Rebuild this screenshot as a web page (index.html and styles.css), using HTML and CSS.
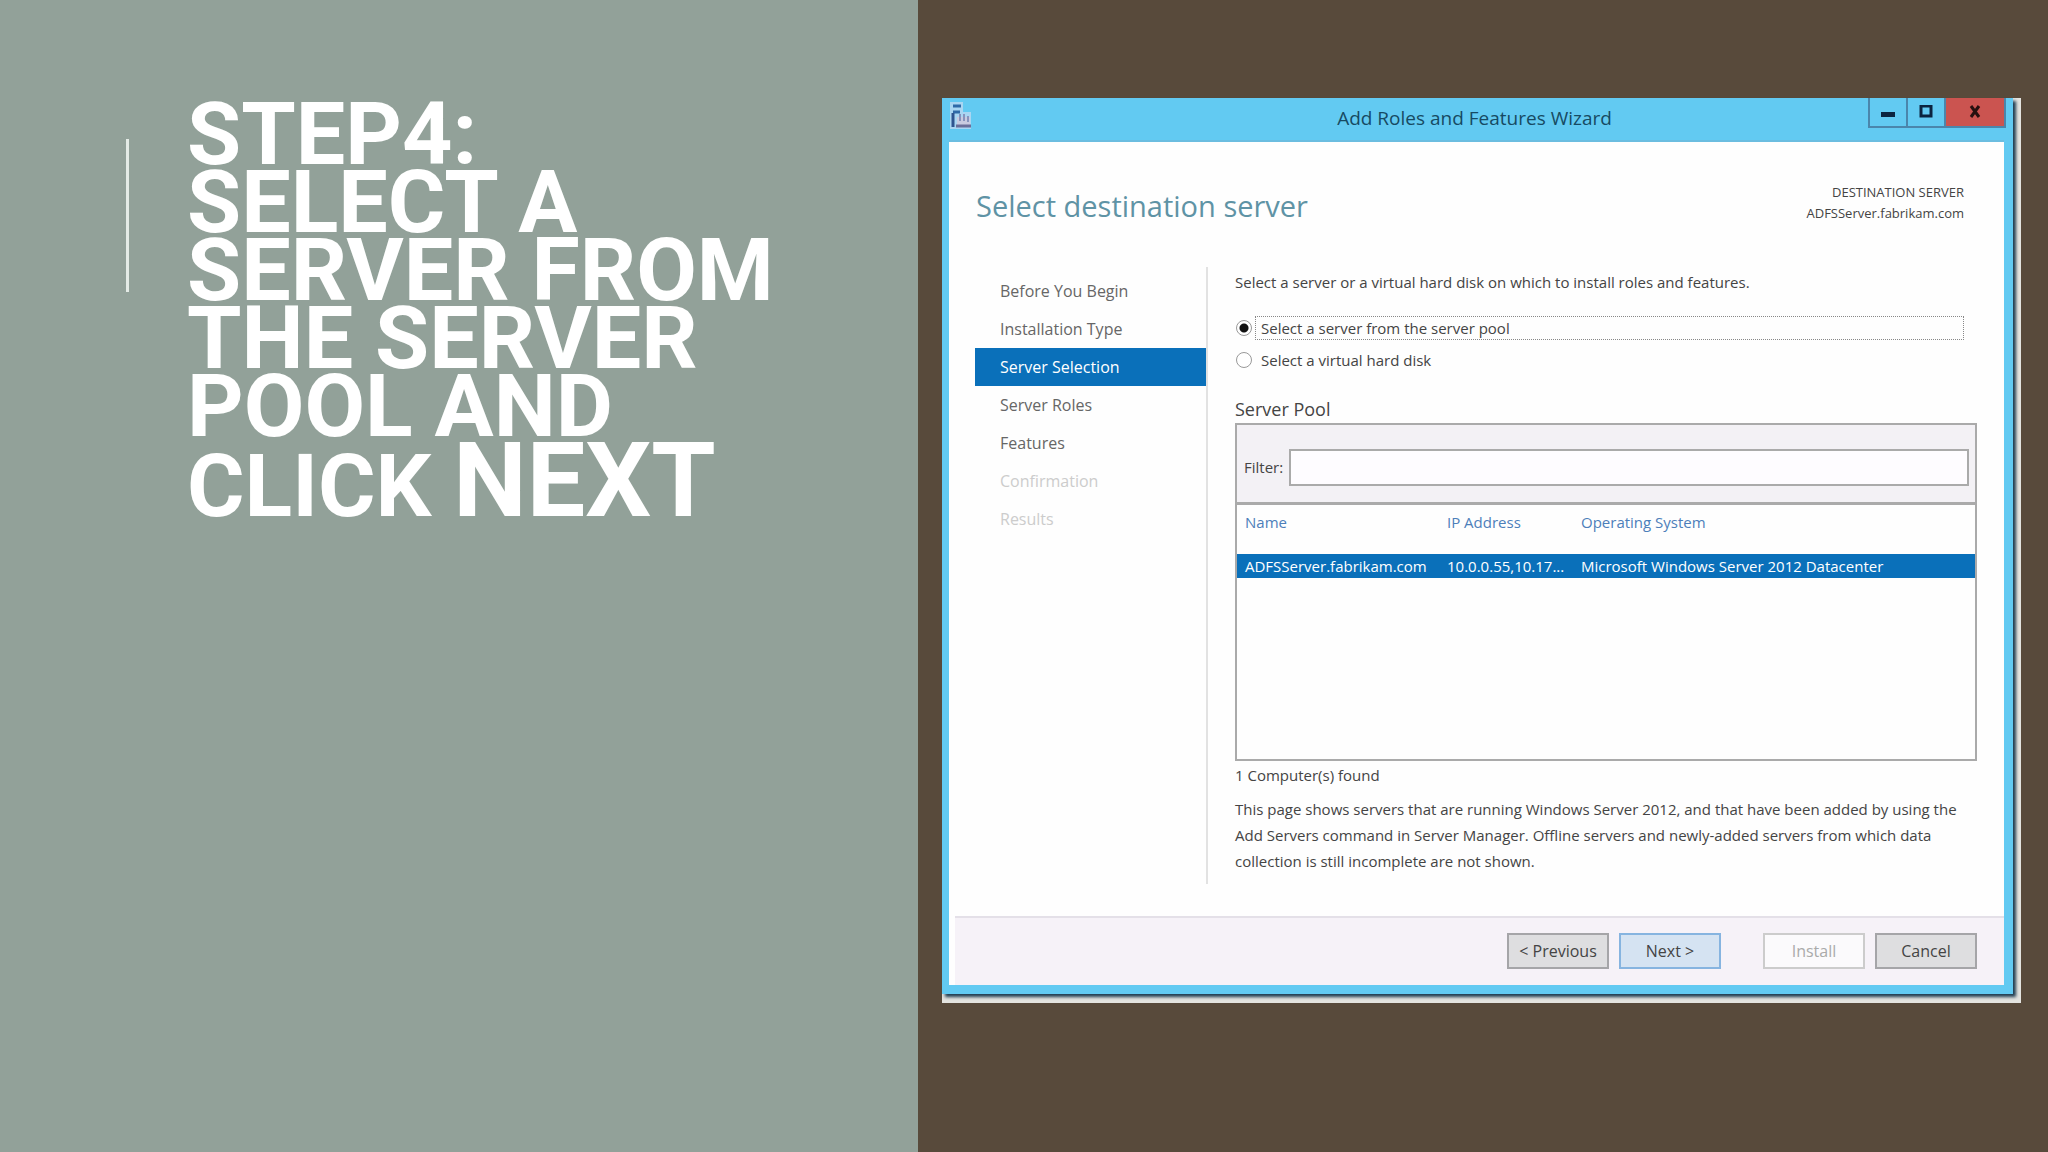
FILE: index.html
```html
<!DOCTYPE html>
<html lang="en">

<head>
    <meta charset="UTF-8">
    <meta name="viewport" content="width=device-width, initial-scale=1.0">
    <title>Step 4: Select a server</title>
    <link rel="stylesheet" href="styles.css">
</head>

<body>

    <div class="slide">
        <!-- Step title -->
        <section class="step">
            <h1>STEP4:<br>SELECT A<br>SERVER FROM<br>THE SERVER<br>POOL AND<br>CLICK <span class="next">NEXT</span></h1>
        </section>

        <!-- Wizard -->
        <section class="stage">
            <div class="frame">
                <div class="window">
                    <header class="titlebar">
                        <svg class="app-icon" viewBox="0 0 24 30" aria-hidden="true">
                            <path d="M1 1h13v10h8v17H1z" fill="#a9d6f2"/>
                            <path d="M4 5h8M4 11h7" stroke="#2f6aa8" stroke-width="3"/>
                            <path d="M4 12v14" stroke="#2f5590" stroke-width="3"/>
                            <path d="M8 16h13v10H8z" fill="#c9cbe0"/>
                            <path d="M11 13v7M15 13v7M19 15v6" stroke="#8794bd" stroke-width="2"/>
                            <path d="M7 25h15" stroke="#6b6f9a" stroke-width="3"/>
                        </svg>
                        <span class="title">Add Roles and Features Wizard</span>
                        <div class="controls">
                            <button type="button" class="minimize" aria-label="Minimize">
                                <svg width="14" height="14" viewBox="0 0 14 14"><path d="M0 9.5h14" stroke="#0b2440" stroke-width="5"/></svg>
                            </button>
                            <button type="button" class="maximize" aria-label="Maximize">
                                <svg width="14" height="14" viewBox="0 0 14 14"><path d="M2 1h10v10H2z" fill="none" stroke="#0b2440" stroke-width="3"/></svg>
                            </button>
                            <button type="button" class="close" aria-label="Close">
                                <svg width="12" height="14" viewBox="0 0 12 14"><path d="M2 1l8 11M10 1L2 12" stroke="#26100f" stroke-width="3"/></svg>
                            </button>
                        </div>
                    </header>

                    <div class="heading">
                        <h2>Select destination server</h2>
                        <p class="destination">DESTINATION SERVER<br>ADFSServer.fabrikam.com</p>
                    </div>

                    <div class="content">
                        <nav class="pages">
                            <a href="#">Before You Begin</a>
                            <a href="#">Installation Type</a>
                            <a href="#" class="active">Server Selection</a>
                            <a href="#">Server Roles</a>
                            <a href="#">Features</a>
                            <a class="disabled">Confirmation</a>
                            <a class="disabled">Results</a>
                        </nav>

                        <form class="selection">
                            <p class="intro">Select a server or a virtual hard disk on which to install roles and features.</p>
                            <div class="option">
                                <input type="radio" id="pool" name="target" checked>
                                <label for="pool" class="focused">Select a server from the server pool</label>
                            </div>
                            <div class="option">
                                <input type="radio" id="disk" name="target">
                                <label for="disk">Select a virtual hard disk</label>
                            </div>

                            <h3>Server Pool</h3>
                            <div class="pool">
                                <div class="filter">
                                    <label for="filter">Filter:</label>
                                    <input type="text" id="filter">
                                </div>
                                <table>
                                    <thead>
                                        <tr>
                                            <th class="name">Name</th>
                                            <th class="ip">IP Address</th>
                                            <th>Operating System</th>
                                        </tr>
                                    </thead>
                                    <tbody>
                                        <tr>
                                            <td>ADFSServer.fabrikam.com</td>
                                            <td>10.0.0.55,10.17...</td>
                                            <td>Microsoft Windows Server 2012 Datacenter</td>
                                        </tr>
                                    </tbody>
                                </table>
                            </div>
                            <p class="found">1 Computer(s) found</p>
                            <p class="note">This page shows servers that are running Windows Server 2012, and that have been added by using the Add Servers command in Server Manager. Offline servers and newly-added servers from which data collection is still incomplete are not shown.</p>
                        </form>
                    </div>

                    <footer class="buttons">
                        <button type="button">&lt; Previous</button>
                        <button type="button" class="primary">Next &gt;</button>
                        <button type="button" class="install" disabled>Install</button>
                        <button type="button">Cancel</button>
                    </footer>
                </div>
            </div>
        </section>
    </div>

</body>

</html>
```
FILE: styles.css
```css
* {
    box-sizing: border-box;
}

body {
    margin: 0;
    font-family: "Open Sans", sans-serif;
    font-size: 15px;
    color: #444;
}

h1, h2, h3, p {
    margin: 0;
    font-weight: normal;
}

.slide {
    display: grid;
    grid-template-columns: 918fr 1130fr;
    min-height: 100vh;
}

/* Left panel */
.step {
    display: flex;
    align-items: flex-start;
    gap: 58px;
    padding: 100px 0 0 126px;
    background-color: #92a199;
}

.step::before {
    content: "";
    width: 3px;
    height: 153px;
    margin-top: 39px;
    background-color: #e4ebe6;
}

.step h1 {
    font-family: Roboto, sans-serif;
    font-size: 88px;
    font-weight: bold;
    line-height: 68px;
    color: #fff;
    white-space: nowrap;
}

.step .next {
    font-size: 104px;
    line-height: 82px;
}

/* Right panel */
.stage {
    padding: 98px 27px 0 24px;
    background-color: #584a3b;
}

.frame {
    padding: 0 8px 9px 0;
    background-color: #e4e4e0;
}

.window {
    border: solid #62caf2;
    border-width: 0 9px 9px 7px;
    background-color: #fefefe;
    box-shadow: 3px 3px 3px #1f3c50;
}

.titlebar {
    display: flex;
    align-items: flex-start;
    height: 44px;
    background-color: #62caf2;
    border-bottom: 2px solid #6bbde0;
}

.app-icon {
    width: 24px;
    height: 30px;
    margin-top: 3px;
}

.title {
    flex: 1;
    padding-left: 108px;
    font-size: 19px;
    line-height: 40px;
    text-align: center;
    color: #174a63;
}

.controls {
    display: flex;
    height: 30px;
    margin-right: -2px;
    border: 2px solid #4a86ac;
    border-top: 0;
}

.controls button {
    display: flex;
    align-items: center;
    justify-content: center;
    width: 38px;
    padding: 0;
    border: 0;
    border-right: 2px solid #4a86ac;
    background: none;
}

.controls .close {
    width: 58px;
    border: 0;
    background-color: #cb5450;
}

.heading {
    display: flex;
    justify-content: space-between;
    padding: 40px 40px 0 27px;
    height: 125px;
}

.heading h2 {
    font-size: 29px;
    line-height: 48px;
    color: #5f93a5;
}

.destination {
    font-size: 13px;
    line-height: 21px;
    text-align: right;
}

.content {
    display: flex;
    padding: 0 27px 32px 26px;
}

/* Wizard pages */
.pages {
    flex: none;
    width: 233px;
    padding-top: 5px;
    border-right: 2px solid #e2e2e2;
}

.pages a {
    display: block;
    padding-left: 25px;
    font-size: 16px;
    line-height: 38px;
    color: #666;
    text-decoration: none;
}

.pages .active {
    color: #fff;
    background-color: #0a70ba;
}

.pages .disabled {
    color: #ccc;
}

.selection {
    flex: 1;
    padding: 2px 0 10px 27px;
}

.intro {
    margin-bottom: 20px;
    line-height: 26px;
}

.option {
    display: flex;
    align-items: center;
    height: 26px;
    margin-bottom: 6px;
}

.option input {
    appearance: none;
    width: 16px;
    height: 16px;
    margin: 0 3px 0 1px;
    border: 1px solid #999;
    border-radius: 50%;
    background-color: #fff;
}

.option input:checked {
    background: radial-gradient(circle, #111 4px, #fff 5px);
}

.option label {
    flex: 1;
    margin-right: 13px;
    padding-left: 5px;
    border: 1px solid transparent;
    line-height: 22px;
}

.option .focused {
    border: 1px dotted #888;
}

.selection h3 {
    margin-top: 22px;
    font-size: 18px;
    line-height: 28px;
}

.pool {
    height: 338px;
    border: 2px solid #aaa;
}

.filter {
    display: flex;
    align-items: center;
    height: 80px;
    padding: 7px 6px 0 7px;
    border-bottom: 3px solid #aaa;
    background-color: #f3f1f5;
}

.filter label {
    width: 45px;
}

.filter input {
    flex: 1;
    height: 37px;
    border: 2px solid #aaa;
    background-color: #fefcff;
}

.pool table {
    width: 100%;
    table-layout: fixed;
    border-collapse: collapse;
}

.pool th {
    height: 49px;
    padding: 7px 0 0 8px;
    font-weight: normal;
    text-align: left;
    vertical-align: top;
    color: #4d7fba;
}

.pool .name {
    width: 202px;
}

.pool .ip {
    width: 134px;
}

.pool td {
    height: 24px;
    padding: 0 0 0 8px;
    white-space: nowrap;
    color: #fff;
    background-color: #0a70ba;
}

.found {
    line-height: 28px;
}

.note {
    margin-top: 7px;
    line-height: 26px;
}

/* Bottom buttons */
.buttons {
    display: flex;
    justify-content: flex-end;
    gap: 10px;
    margin-left: 6px;
    padding: 15px 27px 16px 0;
    border-top: 2px solid #e4e0e8;
    background-color: #f6f2f8;
}

.buttons button {
    width: 102px;
    height: 36px;
    padding: 0;
    border: 2px solid #a5a5a8;
    background-color: #dedee0;
    font-family: inherit;
    font-size: 16px;
    color: #444;
}

.buttons .primary {
    border-color: #86b4e0;
    background-color: #d5e3f2;
}

.buttons .install {
    margin-left: 32px;
    border-color: #ccc;
    background-color: #fbfafc;
    color: #aaa;
}
```
